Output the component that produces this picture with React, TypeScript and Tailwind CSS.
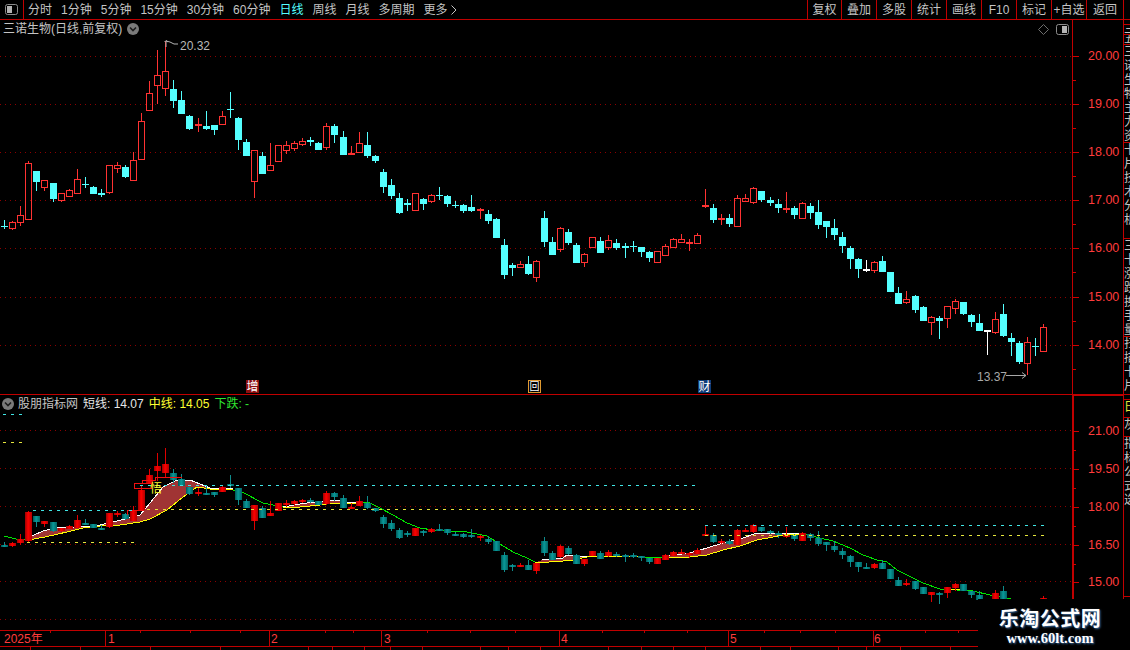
import React from 'react';

type Kind = 'r' | 'c' | 'w';
type Candle = [Kind, number, number, number, number];

// [kind, high, bodyTop, bodyBottom, low], in page pixels of the upper panel
const CANDLES: Candle[] = [
  ['c', 220, 226, 227, 229], ['r', 221, 222, 228, 230], ['r', 206, 215, 222, 226], ['r', 161, 163, 219, 220],
  ['c', 171, 171, 182, 191], ['r', 180, 180, 187, 191], ['c', 183, 183, 199, 202], ['r', 193, 193, 200, 202],
  ['r', 189, 190, 196, 196], ['r', 169, 179, 193, 193], ['c', 177, 184, 185, 188], ['c', 186, 187, 194, 194],
  ['c', 189, 193, 195, 197], ['r', 165, 165, 192, 194], ['r', 162, 165, 168, 173], ['c', 165, 167, 177, 178],
  ['r', 152, 160, 180, 180], ['r', 113, 121, 159, 159], ['r', 81, 93, 110, 110], ['r', 50, 75, 85, 104],
  ['r', 41, 71, 88, 96], ['c', 80, 89, 101, 108], ['c', 91, 100, 114, 114], ['c', 115, 116, 129, 130],
  ['r', 118, 124, 126, 132], ['c', 111, 126, 129, 130], ['c', 125, 125, 130, 135], ['r', 111, 116, 124, 125],
  ['c', 92, 109, 110, 118], ['c', 117, 118, 140, 150], ['c', 139, 142, 156, 156], ['r', 150, 150, 181, 198],
  ['c', 152, 156, 174, 174], ['r', 143, 165, 170, 170], ['r', 145, 145, 161, 162], ['r', 141, 145, 150, 154],
  ['r', 141, 143, 148, 151], ['r', 138, 141, 144, 146], ['c', 137, 140, 142, 146], ['c', 142, 143, 150, 150],
  ['r', 123, 126, 147, 150], ['c', 124, 126, 135, 143], ['c', 131, 137, 155, 155], ['r', 146, 153, 155, 155],
  ['r', 132, 143, 152, 152], ['c', 132, 145, 156, 158], ['c', 155, 156, 161, 163], ['c', 169, 172, 187, 193],
  ['c', 179, 185, 196, 199], ['c', 193, 198, 213, 214], ['c', 199, 203, 205, 211], ['r', 193, 193, 210, 210],
  ['c', 198, 199, 204, 210], ['r', 194, 195, 201, 203], ['c', 187, 195, 196, 200], ['c', 195, 196, 204, 207],
  ['c', 201, 205, 206, 208], ['c', 204, 205, 211, 213], ['c', 195, 207, 211, 212], ['r', 208, 209, 211, 219],
  ['c', 210, 214, 221, 224], ['c', 218, 219, 238, 238], ['c', 239, 245, 275, 279], ['c', 263, 265, 268, 276],
  ['r', 261, 264, 267, 268], ['c', 256, 264, 274, 275], ['r', 260, 261, 277, 282], ['c', 211, 218, 242, 247],
  ['c', 237, 242, 255, 255], ['r', 227, 228, 249, 252], ['c', 229, 232, 243, 245], ['c', 243, 245, 263, 263],
  ['r', 253, 254, 262, 267], ['r', 237, 237, 247, 247], ['c', 237, 241, 253, 253], ['r', 235, 240, 247, 250],
  ['c', 239, 243, 248, 250], ['c', 243, 246, 248, 258], ['c', 241, 246, 247, 252], ['c', 247, 247, 252, 257],
  ['c', 251, 252, 258, 262], ['r', 251, 251, 262, 262], ['r', 244, 246, 255, 255], ['r', 238, 239, 247, 248],
  ['r', 234, 239, 242, 243], ['r', 239, 242, 244, 251], ['r', 233, 235, 243, 243], ['r', 189, 205, 207, 208],
  ['c', 204, 208, 220, 223], ['r', 214, 218, 220, 225], ['c', 214, 218, 224, 227], ['r', 195, 198, 226, 227],
  ['r', 194, 198, 201, 202], ['r', 187, 188, 202, 204], ['c', 191, 191, 200, 202], ['c', 197, 200, 203, 206],
  ['c', 199, 204, 208, 213], ['r', 192, 208, 210, 213], ['c', 206, 208, 215, 219], ['r', 202, 203, 218, 218],
  ['c', 203, 206, 213, 219], ['c', 200, 212, 225, 229], ['c', 221, 221, 227, 238], ['c', 219, 228, 235, 240],
  ['c', 232, 237, 246, 253], ['c', 246, 248, 259, 269], ['c', 258, 259, 269, 278], ['w', 260, 269, 271, 272],
  ['r', 261, 262, 270, 273], ['c', 256, 261, 272, 272], ['c', 272, 272, 292, 292], ['c', 287, 293, 304, 304],
  ['r', 291, 299, 302, 304], ['c', 295, 296, 310, 313], ['c', 306, 307, 321, 321], ['r', 316, 317, 322, 335],
  ['c', 316, 318, 321, 339], ['r', 306, 306, 318, 328], ['r', 299, 301, 308, 314], ['c', 302, 302, 314, 315],
  ['c', 314, 315, 322, 327], ['c', 314, 323, 331, 331], ['w', 330, 330, 332, 355], ['r', 312, 319, 332, 334],
  ['c', 304, 314, 336, 337], ['c', 333, 338, 342, 356], ['c', 341, 343, 362, 364], ['r', 337, 342, 363, 375],
  ['c', 338, 346, 347, 356], ['r', 324, 327, 351, 352],
];

const candleX = (i: number) => Math.round(4.2 + 8.056 * i);
const toLower = (y: number) => Math.round(456.1 + (y - 56) * 0.5218);
const pts = (list: number[][]) => list.map((p) => p.join(',')).join(' ');

const UP_GRID = [56, 104, 152, 200, 248, 297, 345];
const LOW_GRID = [430, 468, 506, 544, 581, 619];
const UP_LABELS: [number, string][] = [[56, '20.00'], [104, '19.00'], [152, '18.00'], [200, '17.00'], [248, '16.00'], [297, '15.00'], [345, '14.00']];
const LOW_LABELS: [number, string][] = [[431, '21.00'], [469, '19.50'], [507, '18.00'], [545, '16.50'], [582, '15.00']];

// indicator bands: white short line above, yellow middle line below
const BANDS: { white: number[][]; yellow: number[][] }[] = [
  {
    white: [[32, 536], [43, 531], [60, 527], [80, 527], [100, 525], [113, 522], [140, 515], [150, 503], [163, 487], [177, 480], [190, 480], [200, 484], [210, 488], [233, 489]],
    yellow: [[28, 540], [45, 537], [67, 532], [83, 528], [100, 526], [120, 525], [140, 522], [150, 519], [167, 510], [183, 497], [197, 487], [210, 489], [233, 490]],
  },
  {
    white: [[283, 507], [300, 504], [307, 503], [320, 502], [333, 500], [347, 502], [363, 502]],
    yellow: [[283, 508], [300, 507], [320, 505], [333, 503], [347, 503], [363, 503]],
  },
  {
    white: [[542, 560], [563, 558], [567, 555], [580, 556], [600, 556], [620, 556], [643, 557]],
    yellow: [[535, 563], [563, 561], [573, 560], [587, 557], [600, 556], [643, 557]],
  },
  {
    white: [[667, 556], [690, 553], [707, 548], [723, 543], [740, 539], [757, 533], [790, 533], [805, 534]],
    yellow: [[667, 557], [690, 557], [707, 555], [723, 550], [740, 546], [757, 540], [773, 537], [790, 534], [805, 534]],
  },
];

const GREEN: number[][][] = [
  [[4, 536], [16, 539], [28, 540]],
  [[233, 490], [242, 492], [263, 503], [283, 507]],
  [[363, 502], [370, 503], [380, 508], [393, 515], [407, 523], [420, 528], [433, 530], [447, 531], [467, 532], [487, 536], [500, 544], [513, 552], [527, 558], [535, 562]],
  [[643, 557], [667, 557]],
  [[805, 534], [820, 538], [833, 541], [850, 548], [863, 555], [877, 560], [887, 562], [897, 570], [923, 583], [940, 589], [973, 591], [990, 595], [1007, 598], [1015, 600]],
];

const DASHES: [number, number, number, string][] = [
  [3, 23, 414, '#3fe6e6'], [3, 23, 442, '#e6e63c'],
  [33, 134, 510, '#3fe6e6'], [27, 134, 542, '#e6e63c'],
  [140, 700, 485, '#3fe6e6'], [147, 700, 509, '#e6e63c'],
  [705, 1045, 525, '#3fe6e6'], [705, 1045, 535, '#e6e63c'],
];

const LEFT_TABS = ['分时', '1分钟', '5分钟', '15分钟', '30分钟', '60分钟', '日线', '周线', '月线', '多周期'];
const RIGHT_TABS = ['复权', '叠加', '多股', '统计', '画线', 'F10', '标记', '+自选'];

const STRIP: { h: string; text: string; color?: string }[] = [
  { h: 'h-[5px]', text: '' },
  { h: 'h-[10px]', text: '三' },
  { h: 'h-[10px]', text: '五' },
  { h: 'h-[98px]', text: '三诺生物主力资' },
  { h: 'h-[96px]', text: '卡片技术分析' },
  { h: 'h-[98px]', text: '三卡涨跌换手量' },
  { h: 'h-[58px]', text: '扫描卡片' },
  { h: 'h-[5px]', text: '' },
  { h: 'h-[18px]', text: '日', color: 'text-[#e6e63c]' },
  { h: 'h-[19px]', text: '灰' },
  { h: 'h-[160px]', text: '指标公式选' },
];

const PanelIcon = ({ right }: { right?: boolean }) => (
  <svg width="13" height="11" viewBox="0 0 13 11" className="block">
    <rect x="0.5" y="0.5" width="12" height="10" rx="2" fill="none" stroke="#8c8c8c" />
    <rect x={right ? 6 : 2} y="2" width="5" height="7" fill="#b4b4b4" />
  </svg>
);

const RoundChevron = () => (
  <svg width="12" height="12" viewBox="0 0 12 12" className="block shrink-0">
    <circle cx="6" cy="6" r="6" fill="#7a7a7a" />
    <path d="M3 4.5 L6 7.5 L9 4.5" fill="none" stroke="#1c1c1c" strokeWidth="1.6" />
  </svg>
);

const UpperCandles = () => (
  <g shapeRendering="crispEdges">
    {CANDLES.map(([kind, high, top, bottom, low], i) => {
      const cx = candleX(i);
      const color = kind === 'r' ? '#ff3232' : kind === 'c' ? '#54ffff' : '#ffffff';
      const h = Math.max(1, bottom - top);
      if (kind === 'r' && h > 2) {
        return (
          <g key={i}>
            <rect x={cx} y={high} width="1" height={top - high} fill={color} />
            <rect x={cx} y={bottom} width="1" height={low - bottom} fill={color} />
            <rect x={cx - 2.5} y={top + 0.5} width="6" height={h} fill="none" stroke={color} strokeWidth="1.2" />
          </g>
        );
      }
      return (
        <g key={i}>
          <rect x={cx} y={high} width="1" height={low - high} fill={color} />
          <rect x={cx - 3} y={top} width="7" height={h} fill={color} />
        </g>
      );
    })}
  </g>
);

const LowerCandles = () => (
  <g shapeRendering="crispEdges">
    {CANDLES.map(([kind, high, top, bottom, low], i) => {
      const cx = candleX(i);
      const red = kind === 'r';
      const yTop = toLower(top);
      const h = Math.max(2, toLower(bottom) - yTop);
      return (
        <g key={i}>
          <rect x={cx} y={toLower(high)} width="1" height={toLower(low) - toLower(high)} fill={red ? '#e00000' : '#0f8c8c'} />
          <rect x={cx - 3} y={yTop} width="7" height={h} fill={red ? 'url(#candleRed)' : 'url(#candleTeal)'} />
        </g>
      );
    })}
  </g>
);

const AxisTicks = ({ labels, minors }: { labels: [number, string][]; minors: number[] }) => (
  <>
    {labels.map(([y, text]) => (
      <g key={text}>
        <rect x="0" y={y} width="6" height="1" fill="#d00000" shapeRendering="crispEdges" />
        <text x="15" y={y + 4} fontSize="12.5" fill="#ff3c3c">{text}</text>
      </g>
    ))}
    {minors.map((y) => (
      <rect key={y} x="0" y={y} width="3" height="1" fill="#d00000" shapeRendering="crispEdges" />
    ))}
  </>
);

export default function App() {
  return (
    <div className="relative w-[1130px] h-[650px] overflow-hidden bg-black text-[12px] text-[#c4c4c4] font-['Liberation_Sans','Noto_Sans_CJK_SC',sans-serif]">
      {/* Toolbar */}
      <div className="flex h-[20px] border-b border-[#c00000]">
        <div className="flex w-[24px] items-center justify-center border-r border-[#c00000]">
          <PanelIcon />
        </div>
        <div className="ml-[4px] flex items-center gap-[9px] leading-none">
          {LEFT_TABS.map((tab) => (
            <span key={tab} className={tab === '日线' ? 'text-[#54ffff]' : ''}>{tab}</span>
          ))}
          <span className="flex items-center gap-[3px]">
            更多
            <svg width="6" height="10" viewBox="0 0 6 10"><path d="M0.5 0.5 L5 5 L0.5 9.5" fill="none" stroke="#c4c4c4" /></svg>
          </span>
        </div>
        <div className="ml-auto flex leading-none">
          {RIGHT_TABS.map((tab, i) => (
            <div key={tab} className={`flex items-center justify-center whitespace-nowrap border-l border-[#c00000] ${i === 0 ? 'w-[34px]' : 'w-[35px]'}`}>{tab}</div>
          ))}
          <div className="flex w-[38px] items-center justify-center border-x border-[#c00000]">返回</div>
          <div className="w-[6px]" />
        </div>
      </div>

      <div className="flex">
        <div className="w-[1123px]">
          {/* Price panel */}
          <div className="flex h-[375px] border-b border-[#c00000]">
            <div className="relative w-[1073px] border-r border-[#c00000]">
              <svg width="1072" height="374" viewBox="0 20 1072 374" className="block">
                {UP_GRID.map((y) => (
                  <line key={y} x1="0" x2="1072" y1={y + 0.5} y2={y + 0.5} stroke="#8c0000" strokeDasharray="1 4" />
                ))}
                <UpperCandles />
                <path d="M166 47 L166 41 L170 42 L174 44 L178 44 M164.5 42 L166 40.5 L168 42" fill="none" stroke="#b4b4b4" />
                <text x="180" y="50" fontSize="12" fill="#b8b8b8">20.32</text>
                <text x="977" y="381" fontSize="12" fill="#a8a8a8">13.37</text>
                <path d="M1006 375.5 L1026 375.5 M1022 372.5 L1026 375.5 L1022 378.5" fill="none" stroke="#a8a8a8" />
              </svg>
              <div className="absolute left-[3px] top-[2px] flex items-center gap-[5px] leading-[14px]">
                <span>三诺生物(日线,前复权)</span>
                <RoundChevron />
              </div>
              <div className="absolute right-[3px] top-[4px] flex items-center gap-[7px]">
                <svg width="11" height="11" viewBox="0 0 11 11" className="block"><path d="M5.5 0.5 L10.5 5.5 L5.5 10.5 L0.5 5.5 Z" fill="none" stroke="#6e6e6e" /></svg>
                <PanelIcon right />
              </div>
              <div className="absolute bottom-[1px] left-[246px] flex h-[13px] w-[13px] items-center justify-center bg-[#8c0f0f] text-white leading-none">增</div>
              <div className="absolute bottom-[1px] left-[528px] flex h-[13px] w-[13px] items-center justify-center border border-[#e09a30] text-white text-[10px] leading-none">回</div>
              <div className="absolute bottom-[1px] left-[698px] flex h-[13px] w-[13px] items-center justify-center bg-[#0f3c78] text-white leading-none">财</div>
            </div>
            <svg width="50" height="374" viewBox="0 20 50 374" className="block">
              <AxisTicks labels={UP_LABELS} minors={[80, 128, 176, 224, 272, 321, 369]} />
            </svg>
          </div>

          {/* Indicator panel */}
          <div className="flex h-[235px]">
            <div className="relative w-[1073px] border-r border-[#c00000]">
              <svg width="1072" height="235" viewBox="0 395 1072 235" className="block">
                <defs>
                  <linearGradient id="candleRed" x1="0" x2="1" y1="0" y2="0">
                    <stop offset="0" stopColor="#a00000" />
                    <stop offset="0.45" stopColor="#ff0000" />
                    <stop offset="1" stopColor="#b00000" />
                  </linearGradient>
                  <linearGradient id="candleTeal" x1="0" x2="1" y1="0" y2="0">
                    <stop offset="0" stopColor="#005a5a" />
                    <stop offset="0.45" stopColor="#0a9a9a" />
                    <stop offset="1" stopColor="#006464" />
                  </linearGradient>
                </defs>
                {LOW_GRID.map((y) => (
                  <line key={y} x1="0" x2="1072" y1={y + 0.5} y2={y + 0.5} stroke="#8c0000" strokeDasharray="1 4" />
                ))}
                {BANDS.map((band, i) => (
                  <g key={i} shapeRendering="crispEdges">
                    <polygon points={pts([...band.white, ...[...band.yellow].reverse()])} fill="#a03434" />
                    <polyline points={pts(band.white)} fill="none" stroke="#ffffff" />
                    <polyline points={pts(band.yellow)} fill="none" stroke="#ffff00" />
                  </g>
                ))}
                {GREEN.map((line, i) => (
                  <polyline key={i} points={pts(line)} fill="none" stroke="#00e600" shapeRendering="crispEdges" />
                ))}
                <path d="M947 589.5 L965 589.5" stroke="#ffff00" shapeRendering="crispEdges" />
                <LowerCandles />
                <g fill="none" stroke="#f01010" shapeRendering="crispEdges">
                  <rect x="134.5" y="483.5" width="17" height="5" />
                  <path d="M142.5 483 L142.5 480.5 L155.5 480.5 L155.5 477.5 L181.5 477.5 M127.5 515 L127.5 510.5 L143.5 510.5" />
                </g>
                {DASHES.map(([x1, x2, y, color]) => (
                  <line key={`${x1}-${y}`} x1={x1} x2={x2} y1={y + 0.5} y2={y + 0.5} stroke={color} strokeDasharray="3 5" shapeRendering="crispEdges" />
                ))}
                <text x="150" y="493" fontSize="12" fill="#ffff30">悟</text>
              </svg>
              <div className="absolute left-[2px] top-[2px] flex items-center gap-[4px] leading-[14px]">
                <RoundChevron />
                <span>股朋指标网</span>
                <span className="ml-[1px] text-[#e6e6e6]">短线: 14.07</span>
                <span className="ml-[1px] text-[#ffff30]">中线: 14.05</span>
                <span className="ml-[1px] text-[#30e630]">下跌: -</span>
              </div>
            </div>
            <svg width="50" height="235" viewBox="0 395 50 235" className="block">
              <rect x="0" y="395" width="1" height="235" fill="#c00000" shapeRendering="crispEdges" />
              <rect x="0" y="395" width="50" height="1" fill="#c00000" shapeRendering="crispEdges" />
              <AxisTicks labels={LOW_LABELS} minors={[450, 488, 526, 564, 601]} />
            </svg>
          </div>
        </div>

        {/* Clipped side strip */}
        <div className="w-[7px] overflow-hidden border-l border-[#c00000]">
          {STRIP.map((item, i) => (
            <div key={i} className={`${item.h} overflow-hidden border-b border-[#c00000] ${i < 3 ? 'leading-[9px]' : 'leading-[14px]'} ${item.color ?? ''}`}>
              <div className="w-[12px]">{item.text}</div>
            </div>
          ))}
        </div>
      </div>

      {/* Time axis */}
      <svg width="1130" height="20" viewBox="0 630 1130 20" className="block">
        <g fill="#c00000" shapeRendering="crispEdges">
          <rect x="0" y="630" width="1130" height="1" />
          <rect x="0" y="646" width="1130" height="1" />
          {[105, 269, 381, 559, 728, 873].map((x) => (
            <rect key={x} x={x} y="630" width="1" height="16" />
          ))}
          {[50, 140, 190, 240, 325, 353, 427, 470, 515, 602, 644, 687, 764, 800, 835, 925, 958].map((x) => (
            <rect key={x} x={x} y="631" width="1" height="2" />
          ))}
          {[30, 80, 150, 220, 308, 332, 364, 390, 422, 480, 508, 540, 608, 641, 673, 705, 760, 790, 838, 866, 900, 950].map((x) => (
            <rect key={x} x={x} y="647" width="1" height="3" />
          ))}
        </g>
        {([[4, '2025年'], [108, '1'], [271, '2'], [384, '3'], [561, '4'], [730, '5'], [874, '6']] as [number, string][]).map(([x, text]) => (
          <text key={text} x={x} y="643" fontSize="12" fill="#ff3c3c">{text}</text>
        ))}
      </svg>

      {/* Site watermark */}
      <div className="absolute bottom-0 right-0 flex h-[51px] w-[152px] flex-col items-center bg-black pt-[9px] pr-[8px]">
        <div className="text-[20px] font-bold leading-[22px] text-white tracking-[0.5px] [text-shadow:1px_1px_2px_#3a6ea5]">乐淘公式网</div>
        <div className="mt-[1px] font-['Liberation_Serif',serif] text-[14.5px] font-bold leading-[15px] text-white [text-shadow:1px_1px_2px_#3a6ea5]">www.60lt.com</div>
      </div>
    </div>
  );
}
